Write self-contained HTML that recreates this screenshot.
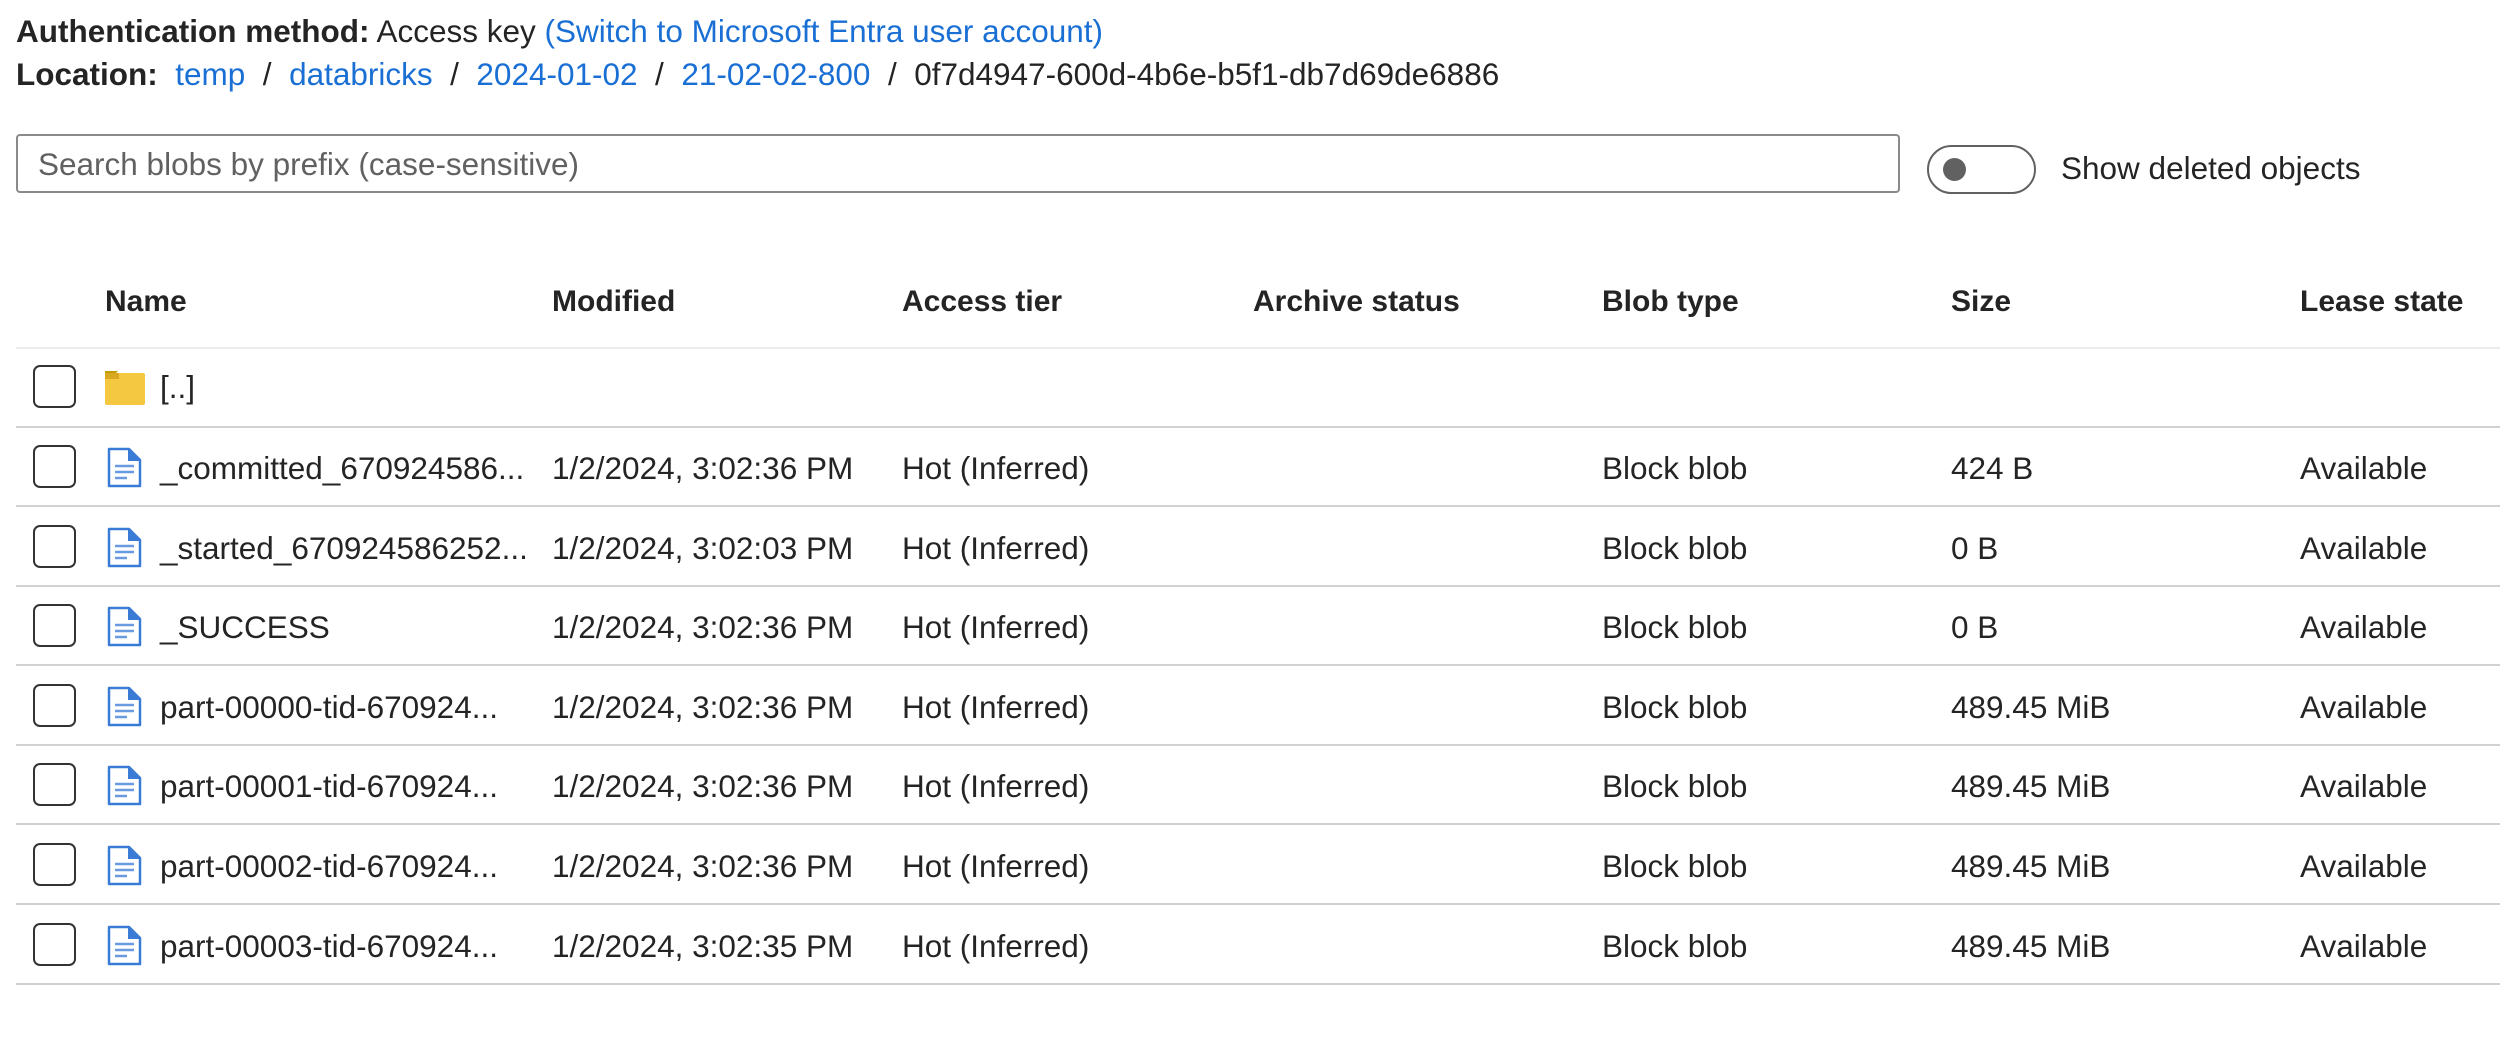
<!DOCTYPE html>
<html><head><meta charset="utf-8"><style>
*{margin:0;padding:0;box-sizing:border-box}
body{width:2500px;height:1038px;background:#fff;font-family:"Liberation Sans",sans-serif;color:#242424;font-size:31.5px;position:relative;overflow:hidden}
.a{position:absolute;white-space:nowrap}
.l{color:#1a6fd4}
.b{font-weight:bold}
.h{font-weight:bold;top:285px;font-size:30px}
.line{position:absolute;left:16px;width:2484px;height:2px;background:#d1d1d1}
.cb{position:absolute;left:33px;width:43px;height:43px;border:2.5px solid #333;border-radius:7px}
.c{position:absolute;line-height:34px}
</style></head><body>
<div class="a" style="left:16px;top:13px"><span class="b">Authentication method:</span> Access key <span class="l">(Switch to Microsoft Entra user account)</span></div>
<div class="a" style="left:16px;top:56px"><span class="b">Location:</span>&nbsp; <span class="l">temp</span> &nbsp;/&nbsp; <span class="l">databricks</span> &nbsp;/&nbsp; <span class="l">2024-01-02</span> &nbsp;/&nbsp; <span class="l">21-02-02-800</span> &nbsp;/&nbsp; 0f7d4947-600d-4b6e-b5f1-db7d69de6886</div>
<div class="a" style="left:16px;top:134px;width:1884px;height:59px;border:2px solid #8a8a8a;border-radius:4px;color:#616161;padding:11px 20px;line-height:34px">Search blobs by prefix (case-sensitive)</div>
<div class="a" style="left:1927px;top:145px;width:109px;height:49px;border:2px solid #616161;border-radius:25px"><div style="position:absolute;left:14px;top:11px;width:23px;height:23px;border-radius:50%;background:#616161"></div></div>
<div class="a" style="left:2061px;top:150px">Show deleted objects</div>
<div class="a h" style="left:105px">Name</div>
<div class="a h" style="left:552px">Modified</div>
<div class="a h" style="left:902px">Access tier</div>
<div class="a h" style="left:1253px">Archive status</div>
<div class="a h" style="left:1602px">Blob type</div>
<div class="a h" style="left:1951px">Size</div>
<div class="a h" style="left:2300px">Lease state</div>
<div class="line" style="top:347px;background:#ebebeb"></div>
<div class="cb" style="top:365px"></div>
<svg class="a" style="left:105px;top:370px" width="42" height="36" viewBox="0 0 42 36"><path d="M0 4h10l3 -3h-13z" fill="#c19c00"/><rect x="0" y="3" width="40" height="32" rx="2" fill="#f5c842"/><rect x="0" y="3" width="14" height="6" fill="#d8a920"/></svg>
<div class="c" style="left:160px;top:370px">[..]</div>
<div class="line" style="top:426px"></div>
<div id="rows"></div>
<script>
var d=[["_committed_670924586...","1/2/2024, 3:02:36 PM","424 B"],["_started_670924586252...","1/2/2024, 3:02:03 PM","0 B"],["_SUCCESS","1/2/2024, 3:02:36 PM","0 B"],["part-00000-tid-670924...","1/2/2024, 3:02:36 PM","489.45 MiB"],["part-00001-tid-670924...","1/2/2024, 3:02:36 PM","489.45 MiB"],["part-00002-tid-670924...","1/2/2024, 3:02:36 PM","489.45 MiB"],["part-00003-tid-670924...","1/2/2024, 3:02:35 PM","489.45 MiB"]];
var h="";
d.forEach(function(r,i){var t=427+79.6*i;var ty=t+24;
h+='<div class="cb" style="top:'+(t+18)+'px"></div>';
h+='<svg class="a" style="left:107px;top:'+(t+20)+'px" width="35" height="41" viewBox="0 0 35 41"><path d="M2 2h20l11 11v26h-31z" fill="#fff" stroke="#3a7bd5" stroke-width="2.5" stroke-linejoin="round"/><path d="M21 2v12h12z" fill="#3a7bd5"/><path d="M8 19h19M8 25h19M8 31h12" stroke="#6a9be0" stroke-width="2.5"/></svg>';
h+='<div class="c" style="left:160px;top:'+ty+'px">'+r[0]+'</div>';
h+='<div class="c" style="left:552px;top:'+ty+'px">'+r[1]+'</div>';
h+='<div class="c" style="left:902px;top:'+ty+'px">Hot (Inferred)</div>';
h+='<div class="c" style="left:1602px;top:'+ty+'px">Block blob</div>';
h+='<div class="c" style="left:1951px;top:'+ty+'px">'+r[2]+'</div>';
h+='<div class="c" style="left:2300px;top:'+ty+'px">Available</div>';
h+='<div class="line" style="top:'+(t+78)+'px"></div>';});
document.getElementById("rows").outerHTML=h;
</script>
</body></html>
